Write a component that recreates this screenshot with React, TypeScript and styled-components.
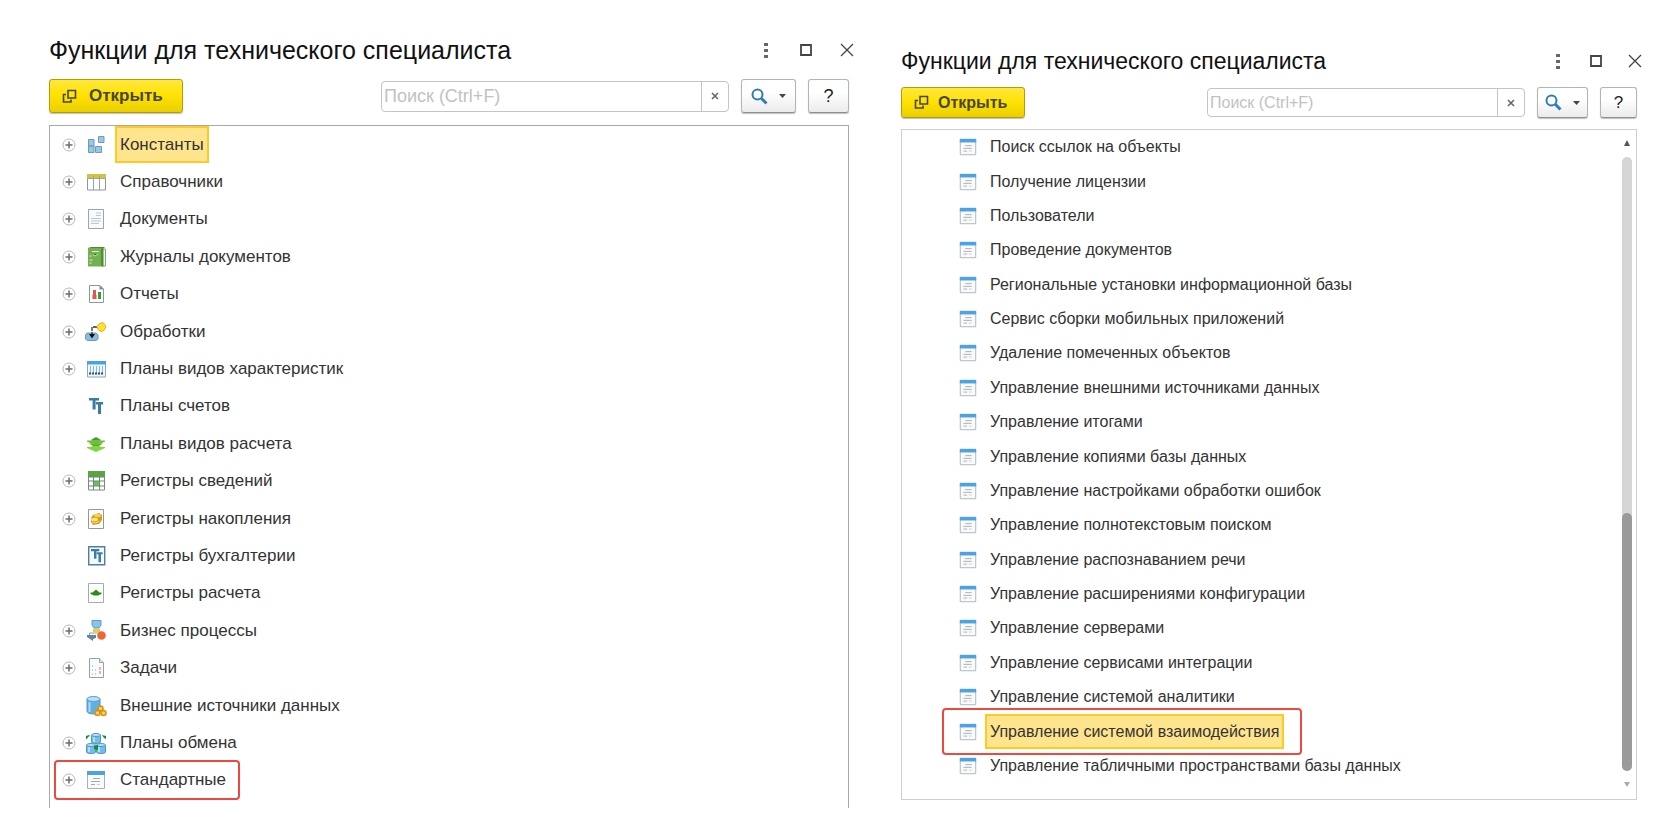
import React from "react";
import styled, { createGlobalStyle, css, ThemeProvider } from "styled-components";

const GlobalStyle = createGlobalStyle`
  *, *::before, *::after { box-sizing: border-box; }
  body { margin: 0; background: #fff; }
  body, button, input { font-family: "Liberation Sans", Arial, sans-serif; }
`;

type Scale = {
  top: number;
  bottom: number;
  title: number;
  titleLine: number;
  titleGap: number;
  control: number;
  field: number;
  fieldWidth: number;
  fieldFont: number;
  open: number;
  openGap: number;
  openPad: number;
  search: number;
  help: number;
  listGap: number;
  font: number;
  icon: number;
  iconGap: number;
  winGap: number;
  listEnd: number;
  line: string;
};

const large: Scale = {
  top: 35, bottom: 24, title: 25, titleLine: 30, titleGap: 14, control: 34, field: 31,
  fieldWidth: 348, fieldFont: 18, open: 134, openGap: 12, openPad: 12, search: 55, help: 41,
  listGap: 12, font: 17, icon: 22, iconGap: 8, winGap: 25, listEnd: 9, line: "#a9a9a9",
};

const small: Scale = {
  top: 46, bottom: 32, title: 23, titleLine: 30, titleGap: 11, control: 31, field: 29,
  fieldWidth: 318, fieldFont: 16, open: 124, openGap: 9, openPad: 12, search: 51, help: 37,
  listGap: 11, font: 16, icon: 20, iconGap: 7, winGap: 23, listEnd: 16, line: "#cfcfcf",
};

const Page = styled.main`
  display: grid;
  grid-template-columns: minmax(0, 800fr) minmax(0, 736fr);
  column-gap: 52px;
  min-height: 100vh;
  padding: 0 43px 0 49px;
`;

const Window = styled.section`
  display: flex;
  flex-direction: column;
  padding: ${({ theme }) => theme.top}px 0 ${({ theme }) => theme.bottom}px;
`;

const TitleBar = styled.header`
  display: flex;
  align-items: center;
  justify-content: space-between;
  height: ${({ theme }) => theme.titleLine}px;
  margin-bottom: ${({ theme }) => theme.titleGap}px;
`;

const Title = styled.h2`
  margin: 0;
  font-size: ${({ theme }) => theme.title}px;
  font-weight: 400;
  line-height: ${({ theme }) => theme.titleLine}px;
  color: #111;
  white-space: nowrap;
`;

const WindowControls = styled.div`
  display: flex;
  align-items: center;
  gap: ${({ theme }) => theme.winGap}px;
  margin-right: -6px;
`;

const IconButton = styled.button`
  display: flex;
  align-items: center;
  justify-content: center;
  flex: none;
  padding: 0;
  border: 0;
  background: none;
  color: #444;
`;

const Toolbar = styled.div`
  display: flex;
  align-items: center;
  height: ${({ theme }) => theme.control}px;
  margin-bottom: ${({ theme }) => theme.listGap}px;
`;

const raised = css`
  height: 100%;
  border: 1px solid #b4b4b4;
  border-bottom-color: #8f8f8f;
  border-radius: 3px;
  box-shadow: 0 1px 1px rgba(0, 0, 0, 0.25);
`;

const OpenButton = styled.button`
  ${raised}
  display: flex;
  align-items: center;
  gap: ${({ theme }) => theme.openGap}px;
  width: ${({ theme }) => theme.open}px;
  padding: 0 0 0 ${({ theme }) => theme.openPad}px;
  border-color: #b09c12;
  background: linear-gradient(#ffe83c, #ffe100 50%, #e9cf00);
  color: #484638;
  font-size: ${({ theme }) => theme.font}px;
  font-weight: 700;
`;

const SearchField = styled.div`
  display: flex;
  flex: 0 1 ${({ theme }) => theme.fieldWidth}px;
  height: ${({ theme }) => theme.field}px;
  margin-left: auto;
  margin-right: 12px;
  border: 1px solid #c4c4c4;
  border-radius: 4px;
  background: #fff;
`;

const SearchInput = styled.input`
  flex: 1;
  min-width: 0;
  padding: 0 2px;
  border: 0;
  outline: 0;
  background: none;
  color: #333;
  font-size: ${({ theme }) => theme.fieldFont}px;
  &::placeholder { color: #c2c2c2; opacity: 1; }
`;

const ClearButton = styled(IconButton)`
  width: 27px;
  border-left: 1px solid #c4c4c4;
  color: #666;
`;

const ToolButton = styled.button<{ $kind: "search" | "help" }>`
  ${raised}
  display: flex;
  align-items: center;
  justify-content: center;
  gap: 11px;
  flex: none;
  width: ${({ theme, $kind }) => theme[$kind]}px;
  margin-right: ${({ $kind }) => ($kind === "search" ? 12 : 0)}px;
  padding: 0;
  background: linear-gradient(#fff 40%, #ebebeb);
  color: #222;
  font-size: ${({ theme }) => theme.font + 1}px;
`;

const ListFrame = styled.div<{ $open?: boolean }>`
  display: flex;
  flex: 1;
  border: 1px solid ${({ theme }) => theme.line};
  border-bottom-width: ${({ $open }) => ($open ? 0 : 1)}px;
`;

const Tree = styled.ul`
  display: flex;
  flex: 1;
  flex-direction: column;
  min-width: 0;
  margin: 0;
  padding: 0 0 ${({ theme }) => theme.listEnd}px;
  list-style: none;
`;

const Row = styled.li<{ $nested?: boolean }>`
  display: flex;
  flex: 1 0 30px;
  padding-left: ${({ $nested }) => ($nested ? 56 : 12)}px;
`;

const Entry = styled.div`
  position: relative;
  display: flex;
  align-items: center;
`;

const Toggle = styled(IconButton)`
  width: 14px;
  height: 14px;
  margin-right: 9px;
  color: #6e6e6e;
`;

const ToggleSpace = styled.span`
  width: 23px;
`;

const ItemIcon = styled.svg`
  flex: none;
  width: ${({ theme }) => theme.icon}px;
  height: ${({ theme }) => theme.icon}px;
`;

const Label = styled.span<{ $selected?: boolean }>`
  display: flex;
  align-items: center;
  align-self: stretch;
  margin-left: ${({ theme }) => theme.iconGap}px;
  padding: 0 3px;
  border: 2px solid ${({ $selected }) => ($selected ? "#fccb26" : "transparent")};
  background: ${({ $selected }) => ($selected ? "#ffe48e" : "none")};
  color: #333;
  font-size: ${({ theme }) => theme.font}px;
  white-space: nowrap;
`;

const Callout = styled.span<{ $wide?: boolean }>`
  position: absolute;
  inset: ${({ $wide }) => ($wide ? "-6px -18px -6px -16px" : "-2px -9px -1px -8px")};
  border: 2px solid #ea4a40;
  border-radius: 4px;
  pointer-events: none;
`;

const ScrollBar = styled.div`
  display: flex;
  flex-direction: column;
  align-items: center;
  width: 10px;
  margin-right: 4px;
  padding: 10px 0 12px;
`;

const ScrollTrack = styled.div`
  display: flex;
  flex: 1;
  flex-direction: column;
  justify-content: flex-end;
  width: 10px;
  margin: 11px 0;
  border-radius: 5px;
  background: #d5d5d5;
`;

const ScrollThumb = styled.div`
  height: 42%;
  border-radius: 5px;
  background: #9a9a9a;
`;

type IconName =
  | "constants" | "catalogs" | "documents" | "journals" | "reports" | "processing"
  | "characteristics" | "accounts" | "calcTypes" | "infoRegister" | "accumRegister"
  | "accountRegister" | "calcRegister" | "business" | "tasks" | "external" | "exchange" | "form";

const tt = (
  <path d="M0 0h10v2.600h-3.400v9h-3v-9H0zM7 4h7v2.400h-2v9.600h-3v-9.600H7z" fill="#3a7ca8" />
);

const cylinder = (x: number, y: number) => (
  <g transform={`translate(${x} ${y})`}>
    <path d="M.5 2v7c0 2 9 2 9 0V2" fill="#72bdeb" stroke="#4f97c8" />
    <ellipse cx="5" cy="2" rx="4.500" ry="1.500" fill="#b9e2fa" stroke="#4f97c8" />
    <path d="M3 4v5" stroke="#b3defa" strokeWidth="2" />
  </g>
);

const drawings: Record<IconName, React.ReactNode> = {
  constants: (
    <g fill="#8fcaf0" stroke="#7b98ab">
      <path d="M13.500 2.500h5.500v6h-5.500zM3.500 5.500h5.500v6.500h-5.500zM3.500 12h5.500v6.500h-5.500zM10.500 12.500h6v6h-6z" />
    </g>
  ),
  catalogs: (
    <>
      <path d="M2.500 3.500h18v15.500h-18z" fill="#fff" stroke="#8d979e" />
      <path d="M2 3h19v4H2z" fill="#d3c43c" />
      <path d="M8.500 5v14M14.500 5v14M2 7.500h19" stroke="#9ba4aa" />
    </>
  ),
  documents: (
    <>
      <path d="M3.500 1.500h15v19h-15z" fill="#f8fafb" stroke="#9ba5ad" />
      <path d="M11 5h5M11 7.500h5M6 10.500h10M6 13h10M6 15.500h8" stroke="#b8c7d4" />
    </>
  ),
  journals: (
    <>
      <path d="M17 3h3.500v17H17z" fill="#eef2ea" stroke="#8ba57f" />
      <path d="M3 2l3-1h14l-2 2z" fill="#4f8a38" />
      <path d="M3 2h13v18.500H3z" fill="#74b04f" />
      <path d="M16 3h2.500v17.500H16z" fill="#4c9234" />
      <path d="M7 5.500h7M4.500 10h2M8 9l2 1 3-2M4.500 14h3M4.500 17h2" stroke="#dff0d2" />
    </>
  ),
  reports: (
    <>
      <path d="M4.500 2.500h10.500l3.500 3.500v13.500h-14z" fill="#fff" stroke="#8b98a2" />
      <path d="M14.500 2v4.500h4.500z" fill="#7e8e98" />
      <path d="M8 7h3v9H8z" fill="#e65350" />
      <path d="M7 12h1v4H7zM11 12h1v4h-1z" fill="#f0a49e" />
      <path d="M13 9h3v7h-3z" fill="#3a9d2c" />
    </>
  ),
  processing: (
    <>
      <path d="M2 12h9l2 2v4l-2 1.500H2L.5 18v-4z" fill="#8abce0" stroke="#6b9cbf" />
      <path d="M7 15V6h7" fill="none" stroke="#333" strokeWidth="1.300" strokeDasharray="4 1" />
      <path d="M4 13h6l-3 4.500z" fill="#111" />
      <path d="M14 3l3-1.500 2 1 2 3-2 4-3 1-3-2-1-3z" fill="#ffe030" stroke="#e0b423" />
    </>
  ),
  characteristics: (
    <>
      <path d="M2.500 3.500h18v15.500h-18z" fill="#eef7fc" stroke="#94a7b5" />
      <path d="M2 3h19v3.500H2z" fill="#4aa2e2" />
      <path d="M5.500 8v7M8.500 8v7M11.500 8v7M14.500 8v7M17.500 8v7" stroke="#88bad9" />
      <path d="M4 15.500h15" stroke="#1d4f75" strokeWidth="2" strokeDasharray="2 1" />
    </>
  ),
  accounts: <g transform="translate(4 3)">{tt}</g>,
  calcTypes: (
    <>
      <path d="M2 14h4l5-3 5 3h4v1l-9 4-9-4z" fill="#83d443" />
      <path d="M4 10.500h14l-4 2.500H8z" fill="#5cae2d" />
      <path d="M2 7.500h4l5-3 5 3h4v1l-6 3H8l-6-3z" fill="#6cc236" />
      <path d="M6 7l5-3 5 3z" fill="#4b982a" />
    </>
  ),
  infoRegister: (
    <>
      <path d="M3.500 1.500h16v18.500h-16z" fill="#fff" stroke="#7b8a8b" />
      <path d="M3 1h17v6H3z" fill="#56a93b" />
      <path d="M9 11h5v5H9z" fill="#6dc148" />
      <path d="M8.500 1v19M14.500 1v19M3 7h17M3 11h17M3 16h17" stroke="#71857a" />
    </>
  ),
  accumRegister: (
    <>
      <path d="M3.500 1.500h15v19h-15z" fill="#fff" stroke="#8f98a3" />
      <path d="M6 10l2-3 6-2 3 2v5l-3 4-6 1-2-3z" fill="#d99c18" />
      <ellipse cx="12.500" cy="7.500" rx="3.500" ry="1.800" fill="#f4d05a" />
      <ellipse cx="9.500" cy="11.500" rx="3.500" ry="1.800" fill="#fae284" />
      <path d="M7 14c2 1.500 5 1 7-1" stroke="#fae284" fill="none" />
    </>
  ),
  accountRegister: (
    <>
      <path d="M3.700 1.700h16v18h-16z" fill="#f5fafd" stroke="#507e9e" strokeWidth="1.400" />
      <g transform="translate(6 4) scale(.83)">{tt}</g>
    </>
  ),
  calcRegister: (
    <>
      <path d="M3.500 1.500h15v19h-15z" fill="#fff" stroke="#a3abb0" />
      <path d="M5.500 10.500h2L11 7.500l3.500 3h2v1.500L13 13.500H9L5.500 12z" fill="#2e8c16" />
    </>
  ),
  business: (
    <>
      <path d="M7 .5h9V5l-2 3H9L7 5z" fill="#86c5ee" stroke="#609bc3" />
      <path d="M8 8.500h7V12H8z" fill="#e7cd4f" />
      <path d="M4.500 16v-3h14v2" stroke="#90a0aa" fill="none" />
      <path d="M2 15h9v3l-3 1v2l-3-2-3-2z" fill="#6384a0" />
      <circle cx="16.500" cy="15.500" r="4.300" fill="#ee6536" />
    </>
  ),
  tasks: (
    <>
      <path d="M4.500 1.500h10l4 4v15h-14z" fill="#fafbfc" stroke="#95a0aa" />
      <path d="M14.500 1.500v4h4" fill="#e3e8ed" stroke="#95a0aa" />
      <path d="M7.500 8v10M10.500 12v6" stroke="#c4ccd3" strokeDasharray="2 2" />
      <path d="M15 10v8" stroke="#efb2ae" strokeWidth="2" strokeDasharray="3 1" />
    </>
  ),
  external: (
    <>
      <path d="M2 4v12c0 4 13 4 13 0V4" fill="#62afe2" stroke="#4f96c8" />
      <ellipse cx="8.500" cy="4" rx="6.500" ry="2.500" fill="#b7def6" stroke="#5ba1d0" />
      <path d="M4.500 7v10" stroke="#a9d9f6" strokeWidth="2" />
      <g fill="#f7cf63" stroke="#d49316" strokeWidth="1.500">
        <circle cx="15.500" cy="13.500" r="2.500" />
        <circle cx="12.500" cy="18" r="2.500" />
        <circle cx="18.500" cy="18" r="2.500" />
      </g>
    </>
  ),
  exchange: (
    <>
      {cylinder(6, 1)}
      {cylinder(1, 11)}
      {cylinder(11, 11)}
      <path d="M1 7V4l3-1 1 1-2 1-1 2zM17 3l4 1v3l-2-1zM9 14l4-1v5l-4-1z" fill="#16911d" />
    </>
  ),
  form: (
    <>
      <path d="M3.500 3.500h17v16h-17z" fill="#fafafa" stroke="#a3b4bf" />
      <path d="M3 2h18v4H3z" fill="#4ba3e3" />
      <path d="M9 9.500h7M7 12.500h9M7 15.500h4" stroke="#a7a9ab" />
      <path d="M13 15.500h3" stroke="#c9cbcd" />
    </>
  ),
};

const TreeIcon = ({ name }: { name: IconName }) => (
  <ItemIcon viewBox={name === "form" ? "1 0 22 22" : "0 0 22 22"} aria-hidden="true">
    {drawings[name]}
  </ItemIcon>
);

type Item = { label: string; icon: IconName; expandable?: boolean; selected?: boolean; marked?: boolean };

const metadata: Item[] = [
  { label: "Константы", icon: "constants", expandable: true, selected: true },
  { label: "Справочники", icon: "catalogs", expandable: true },
  { label: "Документы", icon: "documents", expandable: true },
  { label: "Журналы документов", icon: "journals", expandable: true },
  { label: "Отчеты", icon: "reports", expandable: true },
  { label: "Обработки", icon: "processing", expandable: true },
  { label: "Планы видов характеристик", icon: "characteristics", expandable: true },
  { label: "Планы счетов", icon: "accounts" },
  { label: "Планы видов расчета", icon: "calcTypes" },
  { label: "Регистры сведений", icon: "infoRegister", expandable: true },
  { label: "Регистры накопления", icon: "accumRegister", expandable: true },
  { label: "Регистры бухгалтерии", icon: "accountRegister" },
  { label: "Регистры расчета", icon: "calcRegister" },
  { label: "Бизнес процессы", icon: "business", expandable: true },
  { label: "Задачи", icon: "tasks", expandable: true },
  { label: "Внешние источники данных", icon: "external" },
  { label: "Планы обмена", icon: "exchange", expandable: true },
  { label: "Стандартные", icon: "form", expandable: true, marked: true },
];

const marked = "Управление системой взаимодействия";

const standard: Item[] = [
  "Поиск ссылок на объекты",
  "Получение лицензии",
  "Пользователи",
  "Проведение документов",
  "Региональные установки информационной базы",
  "Сервис сборки мобильных приложений",
  "Удаление помеченных объектов",
  "Управление внешними источниками данных",
  "Управление итогами",
  "Управление копиями базы данных",
  "Управление настройками обработки ошибок",
  "Управление полнотекстовым поиском",
  "Управление распознаванием речи",
  "Управление расширениями конфигурации",
  "Управление серверами",
  "Управление сервисами интеграции",
  "Управление системой аналитики",
  marked,
  "Управление табличными пространствами базы данных",
].map((label) => ({ label, icon: "form", selected: label === marked, marked: label === marked }));

type FunctionsWindowProps = { scale: Scale; items: Item[]; nested?: boolean };

const FunctionsWindow = ({ scale, items, nested }: FunctionsWindowProps) => (
  <ThemeProvider theme={scale}>
    <Window>
      <TitleBar>
        <Title>Функции для технического специалиста</Title>
        <WindowControls>
          <IconButton aria-label="Меню">
            <svg width="14" height="16" viewBox="0 0 14 16" fill="#666">
              <path d="M5 1h4v3H5zM5 7h4v3H5zM5 13h4v3H5z" />
            </svg>
          </IconButton>
          <IconButton aria-label="Развернуть">
            <svg width="16" height="16" viewBox="0 0 16 16" fill="none" stroke="currentColor" strokeWidth="1.800">
              <path d="M3 3h10v10H3z" />
            </svg>
          </IconButton>
          <IconButton aria-label="Закрыть">
            <svg width="16" height="16" viewBox="0 0 16 16" fill="none" stroke="currentColor" strokeWidth="1.300">
              <path d="M2 2l12 12M14 2L2 14" />
            </svg>
          </IconButton>
        </WindowControls>
      </TitleBar>
      <Toolbar>
        <OpenButton>
          <svg width="15" height="15" viewBox="0 0 15 15" fill="none" stroke="currentColor" strokeWidth="1.600" aria-hidden="true">
            <path d="M6 1.500h7.500V9H6zM4 5.500H1.500V13H9v-2.500" />
          </svg>
          Открыть
        </OpenButton>
        <SearchField>
          <SearchInput aria-label="Поиск" placeholder="Поиск (Ctrl+F)" />
          <ClearButton aria-label="Очистить">
            <svg width="8" height="8" viewBox="0 0 8 8" stroke="currentColor" strokeWidth="1.600">
              <path d="M1 1l6 6M7 1L1 7" />
            </svg>
          </ClearButton>
        </SearchField>
        <ToolButton $kind="search" aria-label="Найти">
          <svg width="17" height="17" viewBox="0 0 17 17" fill="none" stroke="#2d7db8">
            <circle cx="6.500" cy="6.500" r="5" strokeWidth="2" />
            <path d="M10.500 10.500l5 5" strokeWidth="3" />
          </svg>
          <svg width="7" height="4" viewBox="0 0 7 4" fill="#444">
            <path d="M0 0h7L3.500 4z" />
          </svg>
        </ToolButton>
        <ToolButton $kind="help">?</ToolButton>
      </Toolbar>
      <ListFrame $open={!nested}>
        <Tree>
          {items.map((item) => (
            <Row key={item.label} $nested={nested}>
              <Entry>
                {item.expandable && (
                  <Toggle aria-label={`Раскрыть: ${item.label}`}>
                    <svg width="14" height="14" viewBox="0 0 14 14" fill="none">
                      <circle cx="7" cy="7" r="6" stroke="#b9b9b9" />
                      <path d="M3.500 7h7M7 3.500v7" stroke="currentColor" strokeWidth="1.500" />
                    </svg>
                  </Toggle>
                )}
                {!item.expandable && !nested && <ToggleSpace />}
                <TreeIcon name={item.icon} />
                <Label $selected={item.selected}>{item.label}</Label>
                {item.marked && <Callout $wide={nested} />}
              </Entry>
            </Row>
          ))}
        </Tree>
        {nested && (
          <ScrollBar>
            <IconButton aria-label="Вверх">
              <svg width="6" height="6" viewBox="0 0 6 6" fill="#555">
                <path d="M3 0l3 6H0z" />
              </svg>
            </IconButton>
            <ScrollTrack>
              <ScrollThumb />
            </ScrollTrack>
            <IconButton aria-label="Вниз">
              <svg width="6" height="5" viewBox="0 0 6 5" fill="#aaa">
                <path d="M0 0h6L3 5z" />
              </svg>
            </IconButton>
          </ScrollBar>
        )}
      </ListFrame>
    </Window>
  </ThemeProvider>
);

const App = () => (
  <>
    <GlobalStyle />
    <Page>
      <FunctionsWindow scale={large} items={metadata} />
      <FunctionsWindow scale={small} items={standard} nested />
    </Page>
  </>
);

export default App;
